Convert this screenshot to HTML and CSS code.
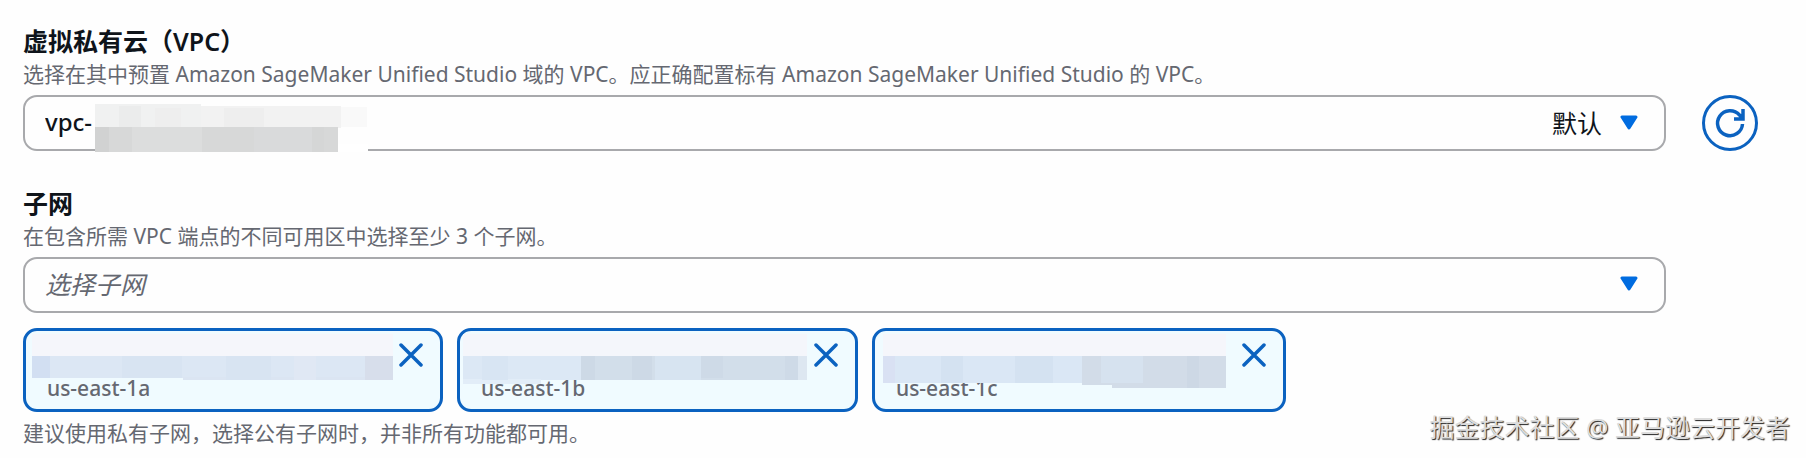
FILE: index.html
```html
<!DOCTYPE html>
<html lang="zh-CN">
<head>
<meta charset="utf-8">
<meta name="viewport" content="width=device-width, initial-scale=1">
<title>虚拟私有云（VPC）</title>
<link rel="stylesheet" href="styles.css">
</head>
<body>
<main class="page">
  <section class="field">
    <label class="label" for="vpc">虚拟私有云（VPC）</label>
    <p class="description" id="vpc-desc">选择在其中预置 Amazon SageMaker Unified Studio 域的 VPC。应正确配置标有 Amazon SageMaker Unified Studio 的 VPC。</p>
    <div class="control-row">
      <div class="dropdown">
        <select class="select" id="vpc" aria-describedby="vpc-desc"><option>vpc-</option></select>
        <svg class="select-mask" width="276" height="52" shape-rendering="crispEdges" aria-hidden="true">
          <path fill="#fff" d="M61 44h213v8H61z"/>
          <path fill="#f0f1f1" d="M1 4h106v24H1z"/><path fill="#ebecec" d="M25 6h22v22H25z"/>
          <path fill="#f2f2f2" d="M107 6h140v22H107z"/><path fill="#eeeeee" d="M61 8h26v20H61zM130 8h40v20h-40z"/>
          <path fill="#f9f9f9" d="M247 7h26v20h-26z"/>
          <path fill="#d7d8d8" d="M1 27h243v25H1z"/><path fill="#d1d2d2" d="M1 27h14v25H1z"/>
          <path fill="#dcdddd" d="M38 27h70v25H38z"/><path fill="#d9dadb" d="M160 27h58v25h-58z"/><path fill="#d5d6d6" d="M218 27h12v25h-12z"/>
        </svg>
        <span class="adornment"><span>默认</span>
          <svg class="caret" width="18" height="16" viewBox="0 0 18 16" aria-hidden="true"><path d="M2 2h14L9 13z"/></svg>
        </span>
      </div>
      <button class="refresh" type="button" aria-label="刷新">
        <svg width="32" height="32" viewBox="0 0 32 32" aria-hidden="true"><path d="M28.500 17a12.500 12.500 0 1 1-3-9l3 3M29 2v10h-9"/></svg>
      </button>
    </div>
  </section>

  <section class="field">
    <label class="label" for="subnet">子网</label>
    <p class="description" id="subnet-desc">在包含所需 VPC 端点的不同可用区中选择至少 3 个子网。</p>
    <div class="control-row">
      <div class="dropdown">
        <select class="select select-empty" id="subnet" aria-describedby="subnet-desc"><option>选择子网</option></select>
        <span class="adornment">
          <svg class="caret" width="18" height="16" viewBox="0 0 18 16" aria-hidden="true"><path d="M2 2h14L9 13z"/></svg>
        </span>
      </div>
    </div>
    <ul class="tokens">
      <li class="token">
        <div class="token-body">
          <span class="zone">us-east-1a</span>
          <svg width="371" height="60" shape-rendering="crispEdges" aria-hidden="true">
            <path fill="#f5f6fb" d="M6 3h361v22H6z"/>
            <path fill="#dce7f4" d="M6 25h361v22H6z"/><path fill="#dbe5f2" d="M157 46h210v3H157z"/>
            <path fill="#d2dff2" d="M6 25h18v22H6z"/><path fill="#d8e4f2" d="M96 25h60v22H96zM200 25h45v24h-45z"/>
            <path fill="#e0e8f4" d="M268 25h22v24h-22z"/><path fill="#d7deeb" d="M339 25h28v24h-28z"/>
          </svg>
        </div>
        <button class="remove" type="button" aria-label="删除 us-east-1a"><svg width="24" height="24" viewBox="0 0 24 24" aria-hidden="true"><path d="M2 2l20 20M22 2L2 22"/></svg></button>
      </li>
      <li class="token">
        <div class="token-body">
          <span class="zone">us-east-1b</span>
          <svg width="352" height="60" shape-rendering="crispEdges" aria-hidden="true">
            <path fill="#f4f6fb" d="M3 3h344v22H3z"/>
            <path fill="#dce8f5" d="M3 25h118v24H3z"/><path fill="#e2edf8" d="M3 48h78v5H3z"/>
            <path fill="#d8e5f3" d="M22 25h26v24H22z"/>
            <path fill="#d2deea" d="M121 25h226v24H121z"/><path fill="#cdd9e6" d="M121 25h14v24h-14zM172 25h20v24h-20z"/>
            <path fill="#d7e4f1" d="M195 25h46v24h-46z"/><path fill="#cedae7" d="M241 25h22v22h-22zM325 25h13v24h-13z"/>
            <path fill="#dde7f1" d="M338 25h9v24h-9z"/>
          </svg>
        </div>
        <button class="remove" type="button" aria-label="删除 us-east-1b"><svg width="24" height="24" viewBox="0 0 24 24" aria-hidden="true"><path d="M2 2l20 20M22 2L2 22"/></svg></button>
      </li>
      <li class="token">
        <div class="token-body">
          <span class="zone">us-east-1c</span>
          <svg width="365" height="60" shape-rendering="crispEdges" aria-hidden="true">
            <path fill="#f5f6fb" d="M8 3h343v22H8z"/>
            <path fill="#dae7f5" d="M8 25h343v27H8z"/><path fill="#d9e1f3" d="M8 25h12v27H8z"/>
            <path fill="#d4e2f1" d="M66 25h22v27H66zM140 25h38v27h-38z"/>
            <path fill="#d2dce8" d="M207 25h144v29H207zM237 50h114v7H237z"/><path fill="#d6e2ef" d="M226 25h42v27h-42z"/>
            <path fill="#cdd8e5" d="M312 25h12v32h-12z"/>
          </svg>
        </div>
        <button class="remove" type="button" aria-label="删除 us-east-1c"><svg width="24" height="24" viewBox="0 0 24 24" aria-hidden="true"><path d="M2 2l20 20M22 2L2 22"/></svg></button>
      </li>
    </ul>
    <p class="description">建议使用私有子网，选择公有子网时，并非所有功能都可用。</p>
  </section>
  <div class="watermark">掘金技术社区 @ 亚马逊云开发者</div>
</main>
</body>
</html>
```
FILE: styles.css
```css
* { box-sizing: border-box; }

body {
  margin: 0;
  background: #fefefe;
  color: #0f141a;
  font-family: "Noto Sans", "Noto Sans CJK SC", sans-serif;
}

.page {
  position: relative;
  padding: 25px 48px 6px 23px;
}

.field + .field { margin-top: 35px; }

.label {
  display: block;
  width: fit-content;
  font-size: 25px;
  font-weight: 600;
  line-height: 32px;
}

.description {
  margin: 0;
  color: #656871;
  font-size: 21px;
  line-height: 34px;
}

.control-row {
  display: grid;
  grid-template-columns: 1fr 56px;
  gap: 36px;
  margin-top: 4px;
}

.dropdown { display: grid; }

.dropdown > * { grid-area: 1 / 1; }

.select {
  width: 100%;
  height: 56px;
  padding: 0 20px 2px;
  appearance: none;
  border: 2px solid #a8a9ac;
  border-radius: 14px;
  background: #fefefe;
  color: inherit;
  font: 500 24px/32px "Noto Sans", "Noto Sans CJK SC", sans-serif;
}

.select-empty {
  color: #656871;
  font-size: 25px;
  font-style: italic;
  font-weight: 400;
}

.select-mask {
  margin: 5px 0 0 71px;
  pointer-events: none;
}

.adornment {
  display: flex;
  align-items: center;
  justify-self: end;
  gap: 18px;
  padding: 0 28px 2px 0;
  font-size: 25px;
  line-height: 32px;
  pointer-events: none;
}

.caret {
  fill: #006ce0;
  stroke: #006ce0;
  stroke-width: 3;
  stroke-linejoin: round;
}

.refresh {
  display: grid;
  place-items: center;
  width: 56px;
  height: 56px;
  padding: 0;
  border: 3px solid #0b62c0;
  border-radius: 50%;
  background: #fefefe;
}

.refresh svg,
.remove svg {
  fill: none;
  stroke: #0b62c0;
  stroke-width: 3.5;
}

.remove svg { stroke-linecap: round; }

.tokens {
  display: flex;
  flex-wrap: wrap;
  gap: 14px;
  margin: 15px 0 4px;
  padding: 0;
  list-style: none;
}

.token {
  display: flex;
  align-items: flex-start;
  gap: 2px;
  height: 84px;
  padding-right: 17px;
  border: 3px solid #0b62c0;
  border-radius: 14px;
  background: #f0fbff;
}

.token-body { display: grid; }

.token-body > * { grid-area: 1 / 1; }

.zone {
  padding: 42px 0 0 21px;
  color: #656871;
  font-size: 21px;
  font-weight: 500;
  line-height: 30px;
}

.token-body svg { z-index: 1; }

.remove {
  display: flex;
  margin-top: 12px;
  padding: 0;
  border: 0;
  background: none;
}

.watermark {
  position: absolute;
  right: 16px;
  bottom: 12px;
  color: #dcdcdc;
  font-size: 25px;
  line-height: 34px;
  text-shadow: 1px 1px 1px #222;
}
```
